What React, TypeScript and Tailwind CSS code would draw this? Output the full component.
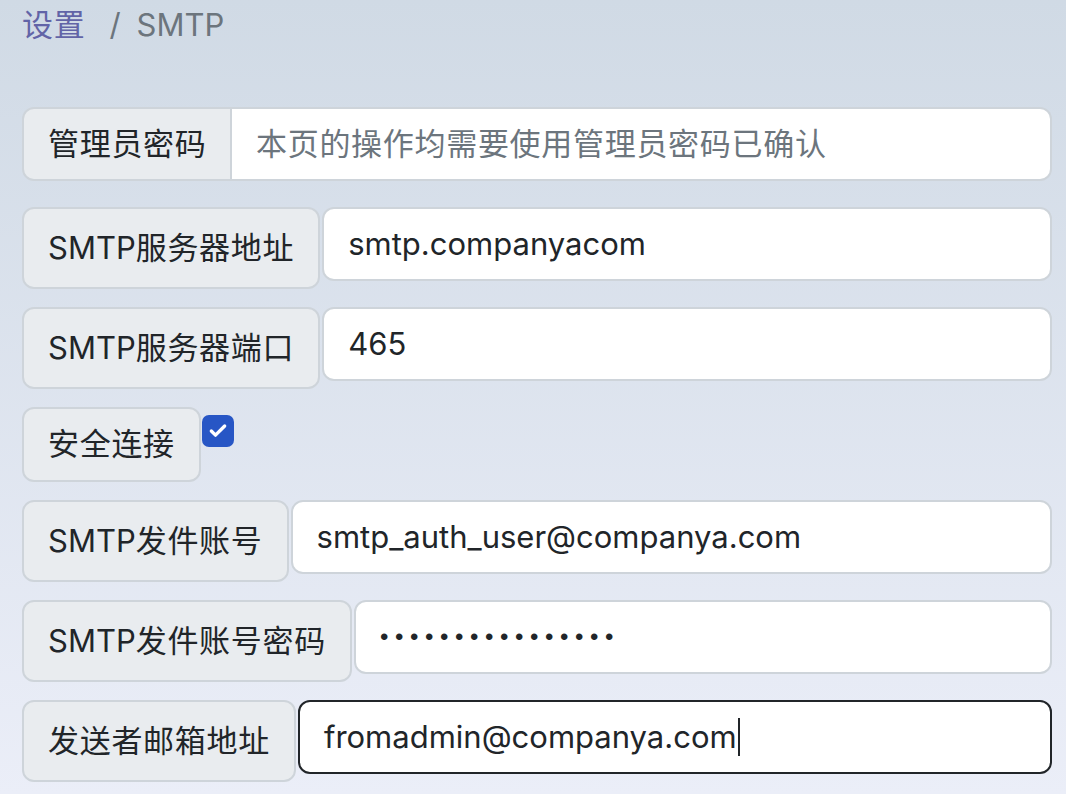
import { Check } from "lucide-react";

const FONT = { fontFamily: 'Inter, "Noto Sans CJK SC", sans-serif' };

type Field = {
  label: string;
  value: string;
  secret?: boolean;
};

const fields: Field[] = [
  { label: "SMTP服务器地址", value: "smtp.companyacom" },
  { label: "SMTP服务器端口", value: "465" },
];

const fields2: Field[] = [
  { label: "SMTP发件账号", value: "smtp_auth_user@companya.com" },
  { label: "SMTP发件账号密码", value: "smtppassword1234", secret: true },
];

/** 中文部分稍微加宽字距，贴近原图的字宽 */
function Txt({ text }: { text: string }) {
  const parts = text.split(/([\u4e00-\u9fff]+)/).filter(Boolean);
  return (
    <>
      {parts.map((p, i) =>
        /[\u4e00-\u9fff]/.test(p) ? (
          <span key={i} className="tracking-[0.7px]">
            {p}
          </span>
        ) : (
          <span key={i}>{p}</span>
        ),
      )}
    </>
  );
}

/** 左侧灰色标签 */
function Label({ text, h = "h-[82px]" }: { text: string; h?: string }) {
  return (
    <div
      className={`flex ${h} shrink-0 items-center whitespace-nowrap rounded-[12px] border-2 border-[#ced4da] bg-[#e9ecef] px-[24px] text-[31px] text-[#212529]`}
    >
      <Txt text={text} />
    </div>
  );
}

function Row({ label, value, secret }: Field) {
  return (
    <div className="mb-[18px] flex items-start gap-[2px]">
      <Label text={label} />
      <div className="flex h-[74px] min-w-0 flex-1 items-center rounded-[12px] border-2 border-[#ced4da] bg-white px-[24px] text-[31px] text-[#212529]">
        {secret ? (
          <span
            className="text-[24px] tracking-[6.6px]"
            style={{ fontFamily: '"Liberation Sans", sans-serif' }}
          >
            {"•".repeat(value.length)}
          </span>
        ) : (
          <span>{value}</span>
        )}
      </div>
    </div>
  );
}

export default function App() {
  return (
    <div
      className="min-h-[794px] bg-gradient-to-b from-[#d0dae5] to-[#ebeef8] pl-[22px] pr-[14px] pt-[4px]"
      style={FONT}
    >
      {/* 面包屑 */}
      <nav className="flex h-[42px] items-center text-[31px]">
        <span className="tracking-[0.7px] text-[#6264a7]">设置</span>
        <span className="ml-[24px] mr-[16px] text-[#6c757d]">/</span>
        <span className="text-[#6c757d]">SMTP</span>
      </nav>

      <div className="mt-[61px]">
        {/* 管理员密码 */}
        <div className="mb-[26px] flex h-[74px]">
          <div className="flex w-[210px] shrink-0 items-center whitespace-nowrap rounded-l-[12px] border-2 border-[#ced4da] bg-[#e9ecef] px-[24px] text-[31px] text-[#212529]">
            <Txt text="管理员密码" />
          </div>
          <div className="flex min-w-0 flex-1 items-center whitespace-nowrap rounded-r-[12px] border-2 border-l-0 border-[#ced4da] bg-white px-[24px] text-[31px] text-[#6c757d]">
            <Txt text="本页的操作均需要使用管理员密码已确认" />
          </div>
        </div>

        {fields.map((f) => (
          <Row key={f.label} {...f} />
        ))}

        {/* 安全连接 */}
        <div className="mb-[18px] flex items-start gap-[1px]">
          <Label text="安全连接" h="h-[75px]" />
          <div className="mt-[8px] flex h-[32px] w-[32px] items-center justify-center rounded-[7px] bg-[#2756c5]">
            <Check size={20} strokeWidth={4} className="text-white" />
          </div>
        </div>

        {fields2.map((f) => (
          <Row key={f.label} {...f} />
        ))}

        {/* 发送者邮箱地址（聚焦中） */}
        <div className="flex items-start gap-[2px]">
          <Label text="发送者邮箱地址" />
          <div className="flex h-[74px] min-w-0 flex-1 items-center rounded-[12px] border-2 border-[#212529] bg-white px-[24px] text-[31px] text-[#212529]">
            <span>fromadmin@companya.com</span>
            <span className="ml-[1px] h-[38px] w-[2px] bg-[#212529]" />
          </div>
        </div>
      </div>
    </div>
  );
}
